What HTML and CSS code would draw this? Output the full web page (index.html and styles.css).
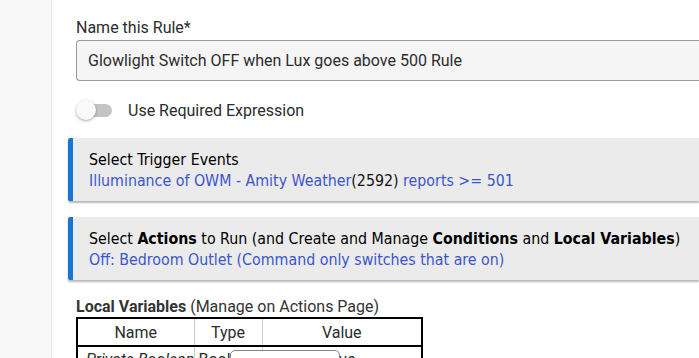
FILE: index.html
```html
<!DOCTYPE html>
<html>
<head>
<meta charset="utf-8">
<link rel="stylesheet" href="styles.css">
</head>
<body>
<div class="page">
  <aside class="sidebar"></aside>
  <main class="content">
    <label class="field-label">Name this Rule*</label>
    <div class="text-input">Glowlight Switch OFF when Lux goes above 500 Rule</div>
    <div class="toggle-row">
      <span class="switch"><span class="track"></span><span class="knob"></span></span>
      <span class="toggle-label">Use Required Expression</span>
    </div>
    <div class="panel">
      <div class="panel-title">Select Trigger Events</div>
      <div class="panel-desc">Illuminance of OWM - Amity Weather<span class="dark">(2592)</span> reports &gt;= 501</div>
    </div>
    <div class="panel">
      <div class="panel-title">Select <b>Actions</b> to Run (and Create and Manage <b>Conditions</b> and <b>Local Variables</b>)</div>
      <div class="panel-desc">Off: Bedroom Outlet (Command only switches that are on)</div>
    </div>
    <div class="vars-title"><b>Local Variables</b> (Manage on Actions Page)</div>
    <div class="table-wrap">
      <table class="vars">
        <colgroup><col class="c-name"><col class="c-type"><col class="c-value"></colgroup>
        <thead>
          <tr><th>Name</th><th>Type</th><th>Value</th></tr>
        </thead>
        <tbody>
          <tr><td><i>Private Boolean</i></td><td>Boolean</td><td class="val">true</td></tr>
        </tbody>
      </table>
      <div class="popup"></div>
    </div>
  </main>
</div>
</body>
</html>
```
FILE: styles.css
```css
html, body {
  margin: 0;
  padding: 0;
  background: #ffffff;
  overflow: hidden;
  height: 358px;
}
.page {
  display: flex;
  height: 358px;
  font-family: Roboto, "Noto Sans", sans-serif;
  color: #333333;
}
.sidebar {
  width: 51px;
  flex: none;
  background: #f8f8f8;
  border-right: 1px solid #ececec;
  box-shadow: 1px 0 2px rgba(0,0,0,0.04);
}
.content {
  flex: 1;
  min-width: 0;
  padding: 18px 0 0 16px;
}
.field-label {
  display: block;
  margin-left: 8px;
  font-size: 16px;
  line-height: 20px;
  color: #2c2c2c;
}
.text-input {
  margin: 2px 0 0 8px;
  height: 39px;
  border: 1px solid #9a9a9a;
  border-right: none;
  border-radius: 4px 0 0 4px;
  background: #f5f5f5;
  font-size: 16px;
  line-height: 39px;
  padding-left: 11px;
  color: #2c2c2c;
  white-space: nowrap;
}
.toggle-row {
  display: flex;
  align-items: center;
  margin: 19px 0 0 8px;
  height: 20px;
}
.switch {
  position: relative;
  width: 36px;
  height: 20px;
  flex: none;
}
.track {
  position: absolute;
  left: 1px;
  top: 4px;
  width: 35px;
  height: 13px;
  border-radius: 7px;
  background: #c4c4c4;
}
.knob {
  position: absolute;
  left: 0;
  top: 0;
  width: 20px;
  height: 20px;
  border-radius: 50%;
  background: #fafafa;
  box-shadow: 0 1px 3px rgba(0,0,0,0.35);
}
.toggle-label {
  margin-left: 16px;
  font-size: 16px;
  color: #2c2c2c;
}
.panel {
  margin-top: 18px;
  background: #ebebeb;
  border-left: 5px solid #1976d2;
  border-radius: 2px 0 0 2px;
  box-shadow: 0 2px 2px rgba(0,0,0,0.28);
  padding: 11px 0 10px 16px;
  font-family: "DejaVu Sans Condensed", "DejaVu Sans", sans-serif;
  font-size: 15.8px;
  line-height: 21px;
  white-space: nowrap;
}
.panel + .panel {
  margin-top: 16px;
}
.panel-title {
  color: #000000;
}
.panel-desc {
  color: #3a56cf;
}
.panel-desc .dark {
  color: #111111;
}
.vars-title {
  margin: 17px 0 0 8px;
  font-size: 16px;
  line-height: 20px;
  color: #333333;
}
.table-wrap {
  position: relative;
  margin-left: 8px;
}
.vars {
  border-collapse: collapse;
  table-layout: fixed;
  border: 2px solid #000000;
  width: 347px;
  font-size: 16px;
  color: #2c2c2c;
}
.c-name { width: 117px; }
.c-type { width: 68px; }
.vars th {
  font-weight: normal;
  height: 26px;
  border-bottom: 2px solid #000000;
  padding: 0;
}
.vars td {
  height: 24px;
  padding: 0 0 0 8px;
  text-align: left;
  white-space: nowrap;
  overflow: hidden;
}
.vars th + th, .vars td + td {
  border-left: 1px solid #cccccc;
}
.vars td + td {
  padding-left: 4px;
}
.vars td.val {
  text-align: center;
  padding: 0;
}
.popup {
  position: absolute;
  left: 154px;
  top: 33px;
  width: 108px;
  height: 30px;
  background: #ffffff;
  border: 1px solid #888888;
  border-radius: 5px;
}
```
